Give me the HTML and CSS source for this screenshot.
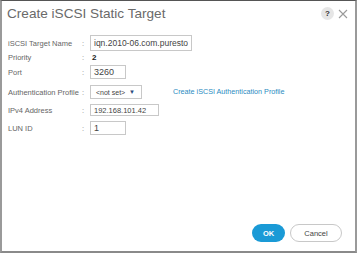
FILE: index.html
```html
<!DOCTYPE html>
<html lang="en">
<head>
  <meta charset="UTF-8" />
  <title>Create iSCSI Static Target</title>
  <link rel="stylesheet" href="styles.css">
</head>
<body>
  <div class="dialog">
    <header class="dialog-header">
      <h1 class="dialog-title">Create iSCSI Static Target</h1>
      <div class="header-icons">
        <span class="help-icon">?</span>
        <svg class="close-icon" width="10" height="10" viewBox="0 0 10 10">
          <path d="M1 1 L9 9 M9 1 L1 9" stroke="#9a9a9a" stroke-width="1.1" fill="none"/>
        </svg>
      </div>
    </header>

    <form class="target-form">
      <label class="field-label">iSCSI Target Name</label>
      <span class="colon">:</span>
      <div class="field-value"><input class="text-input input-wide" type="text" value="iqn.2010-06.com.purestorage" /></div>

      <label class="field-label">Priority</label>
      <span class="colon">:</span>
      <div class="field-value"><strong class="static-value">2</strong></div>

      <label class="field-label">Port</label>
      <span class="colon">:</span>
      <div class="field-value"><input class="text-input input-short" type="text" value="3260" /></div>

      <label class="field-label">Authentication Profile</label>
      <span class="colon">:</span>
      <div class="field-value">
        <div class="select-box"><span>&lt;not set&gt;</span><span class="caret">▼</span></div>
        <a class="create-link" href="#">Create iSCSI Authentication Profile</a>
      </div>

      <label class="field-label">IPv4 Address</label>
      <span class="colon">:</span>
      <div class="field-value"><input class="text-input input-ip" type="text" value="192.168.101.42" /></div>

      <label class="field-label">LUN ID</label>
      <span class="colon">:</span>
      <div class="field-value"><input class="text-input input-short input-lun" type="text" value="1" /></div>
    </form>

    <footer class="dialog-footer">
      <button class="btn btn-ok" type="button">OK</button>
      <button class="btn btn-cancel" type="button">Cancel</button>
    </footer>
  </div>
</body>
</html>
```

FILE: styles.css
```css
body {
  margin: 0;
  background-color: white;
  font-family: 'Liberation Sans', Arial, sans-serif;
}

.dialog {
  width: 353px;
  height: 250px;
  border-top: 1px solid #555;
  border-left: 2px solid #9a9a9a;
  border-right: 2px solid #9a9a9a;
  border-bottom: 2px solid #8a8a8a;
  display: flex;
  flex-direction: column;
  background: white;
}

.dialog-header {
  display: flex;
  justify-content: space-between;
  align-items: center;
  height: 25px;
  padding: 0 7px 0 5px;
}

.dialog-title {
  margin: 0;
  font-size: 13.6px;
  font-weight: normal;
  color: #6a6a6a;
}

.header-icons {
  display: flex;
  align-items: center;
  gap: 4px;
}

.help-icon {
  width: 13px;
  height: 13px;
  border-radius: 50%;
  background-color: #e6e6e6;
  color: #333;
  font-size: 8px;
  font-weight: bold;
  display: flex;
  align-items: center;
  justify-content: center;
}

.target-form {
  display: grid;
  grid-template-columns: 73px 9px 1fr;
  grid-template-rows: 16px 12px 18px 22px 14px 22px;
  align-items: center;
  margin: 9px 0 0 6px;
}

.field-label {
  font-size: 7.5px;
  color: #666;
  white-space: nowrap;
}

.colon {
  font-size: 7.5px;
  color: #888;
  padding-left: 1px;
}

.field-value {
  display: flex;
  align-items: center;
}

.static-value {
  font-size: 8px;
  color: #222;
  padding-left: 2px;
}

.text-input {
  box-sizing: border-box;
  height: 14px;
  border: 1px solid #c8c8c8;
  padding: 0 3px;
  font-family: 'Liberation Sans', Arial, sans-serif;
  font-size: 8.5px;
  color: #444;
  background: white;
  outline: none;
}

.input-wide {
  width: 102px;
  height: 16px;
  font-size: 8.5px;
}

.input-short {
  width: 36px;
  font-size: 9px;
}

.input-ip {
  width: 69px;
  height: 12px;
  font-size: 7.5px;
}

.input-lun {
  height: 14px;
}

.select-box {
  box-sizing: border-box;
  width: 52px;
  height: 14px;
  border: 1px solid #c8c8c8;
  display: flex;
  align-items: center;
  justify-content: space-between;
  padding: 0 6px 0 5px;
  font-size: 7px;
  color: #444;
}

.caret {
  font-size: 6px;
  color: #2a4b7c;
}

.create-link {
  font-size: 7.2px;
  color: #2a8bbf;
  text-decoration: none;
  margin-left: 31px;
  margin-top: -2px;
  white-space: nowrap;
}

.dialog-footer {
  margin-top: auto;
  display: flex;
  justify-content: flex-end;
  gap: 5px;
  padding: 0 13px 9px 0;
}

.btn {
  height: 18px;
  border-radius: 9px;
  font-family: 'Liberation Sans', Arial, sans-serif;
  font-size: 7.5px;
  cursor: pointer;
  padding: 0;
}

.btn-ok {
  width: 33px;
  background-color: #1a9ad6;
  border: none;
  color: white;
  font-weight: bold;
}

.btn-cancel {
  width: 52px;
  background-color: white;
  border: 1px solid #c8c8c8;
  color: #444;
}
```
